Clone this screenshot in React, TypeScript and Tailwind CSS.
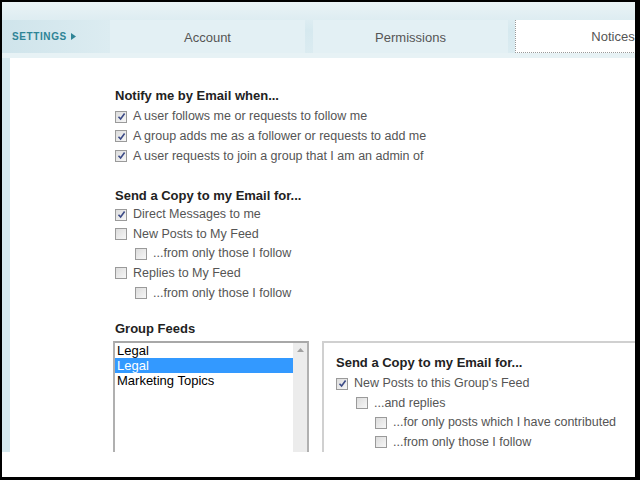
type Row = { label: string; checked?: boolean; level?: number }

const NOTIFY: Row[] = [
  { label: 'A user follows me or requests to follow me', checked: true },
  { label: 'A group adds me as a follower or requests to add me', checked: true },
  { label: 'A user requests to join a group that I am an admin of', checked: true },
]

const COPY: Row[] = [
  { label: 'Direct Messages to me', checked: true },
  { label: 'New Posts to My Feed' },
  { label: '...from only those I follow', level: 1 },
  { label: 'Replies to My Feed' },
  { label: '...from only those I follow', level: 1 },
]

const GROUP_COPY: Row[] = [
  { label: "New Posts to this Group's Feed", checked: true },
  { label: '...and replies', level: 1 },
  { label: '...for only posts which I have contributed', level: 2 },
  { label: '...from only those I follow', level: 2 },
]

function Box({ checked }: { checked?: boolean }) {
  return (
    <span className="w-[12px] h-[12px] shrink-0 border border-[#9a9a9a] bg-gradient-to-br from-[#dcdcdc] to-[#f7f7f7] flex items-center justify-center">
      {checked && (
        <svg width="9" height="9" viewBox="0 0 9 9">
          <path d="M1.5 4.8 L3.6 7 L7.6 1.6" fill="none" stroke="#3b4a86" strokeWidth="1.6" />
        </svg>
      )}
    </span>
  )
}

function CheckRow({ row }: { row: Row }) {
  const pad = row.level === 2 ? 'pl-[39px]' : row.level === 1 ? 'pl-[20px]' : 'pl-0'
  return (
    <div className={`h-[19.6px] flex items-center gap-[6px] ${pad}`}>
      <Box checked={row.checked} />
      <span className="text-[12.5px] text-[#555] whitespace-nowrap">{row.label}</span>
    </div>
  )
}

function Heading({ children }: { children: string }) {
  return <h3 className="h-[18px] leading-[18px] text-[13px] font-bold text-[#222] whitespace-nowrap">{children}</h3>
}

export default function App() {
  return (
    <div className="w-[640px] h-[480px] bg-white border-t-2 border-l-2 border-b-[3px] border-r-[5px] border-black overflow-hidden flex flex-col font-['Liberation_Sans',Arial,sans-serif]">
      {/* header + tabs */}
      <div className="h-[56px] shrink-0 bg-gradient-to-b from-[#eaf3f6] via-[#d6e9ef] to-[#dcecf1] pt-[18px] flex flex-col">
        <div className="flex h-[33px]">
          <div className="w-[108px] shrink-0 flex items-center pl-[10px] gap-[4px] bg-gradient-to-r from-[#cfe4eb] to-[#dcecf1]">
            <span className="text-[10px] font-bold tracking-[0.6px] text-[#2e8496]">SETTINGS</span>
            <svg width="5" height="7" viewBox="0 0 5 7"><path d="M0 0 L5 3.5 L0 7Z" fill="#2e8496" /></svg>
          </div>
          <div className="w-[195px] shrink-0 bg-[#e3f0f4] flex items-center justify-center pt-[2px] text-[13px] text-[#555]">Account</div>
          <div className="w-[8px] shrink-0" />
          <div className="w-[195px] shrink-0 bg-[#e3f0f4] flex items-center justify-center pt-[2px] text-[13px] text-[#555]">Permissions</div>
          <div className="w-[7px] shrink-0" />
          <div className="w-[195px] shrink-0 bg-white border-l border-b border-dotted border-[#999] flex items-center justify-center pt-[2px] text-[13px] text-[#555]">Notices</div>
        </div>
        <div className="flex-1 bg-[#e7f2f5]" />
      </div>

      {/* body */}
      <div className="h-[394px] shrink-0 flex overflow-hidden">
        <div className="w-[8px] shrink-0 bg-[#d6e9ef]" />
        <div className="flex-1 bg-white pl-[105px] pt-[29px] flex flex-col">
          <Heading>Notify me by Email when...</Heading>
          <div className="mt-[2px]">
            {NOTIFY.map((r, i) => <CheckRow key={i} row={r} />)}
          </div>

          <div className="mt-[21px]"><Heading>Send a Copy to my Email for...</Heading></div>
          <div>
            {COPY.map((r, i) => <CheckRow key={i} row={r} />)}
          </div>

          <div className="mt-[17px]"><Heading>Group Feeds</Heading></div>
          <div className="mt-[3px] flex gap-[13px] -ml-[2px]">
            <div className="w-[196px] h-[140px] shrink-0 border-2 border-[#b0b0b0] border-t-[#a8a8a8] flex text-[13px] text-black">
              <div className="flex-1">
                <div className="h-[15px] leading-[15px] pl-[2px]">Legal</div>
                <div className="h-[15px] leading-[15px] pl-[2px] bg-[#3399ff] text-white">Legal</div>
                <div className="h-[15px] leading-[15px] pl-[2px]">Marketing Topics</div>
              </div>
              <div className="w-[14px] bg-[#ececec] flex justify-center pt-[5px]">
                <svg width="7" height="4" viewBox="0 0 7 4"><path d="M0 4 L3.5 0 L7 4Z" fill="#a0a0a0" /></svg>
              </div>
            </div>
            <div className="flex-1 h-[140px] border-t-2 border-l-2 border-[#d0d0d0] pl-[12px] pt-[11px]">
              <Heading>Send a Copy to my Email for...</Heading>
              <div className="mt-[2px]">
                {GROUP_COPY.map((r, i) => <CheckRow key={i} row={r} />)}
              </div>
            </div>
          </div>
        </div>
      </div>
      <div className="flex-1 bg-white" />
    </div>
  )
}
